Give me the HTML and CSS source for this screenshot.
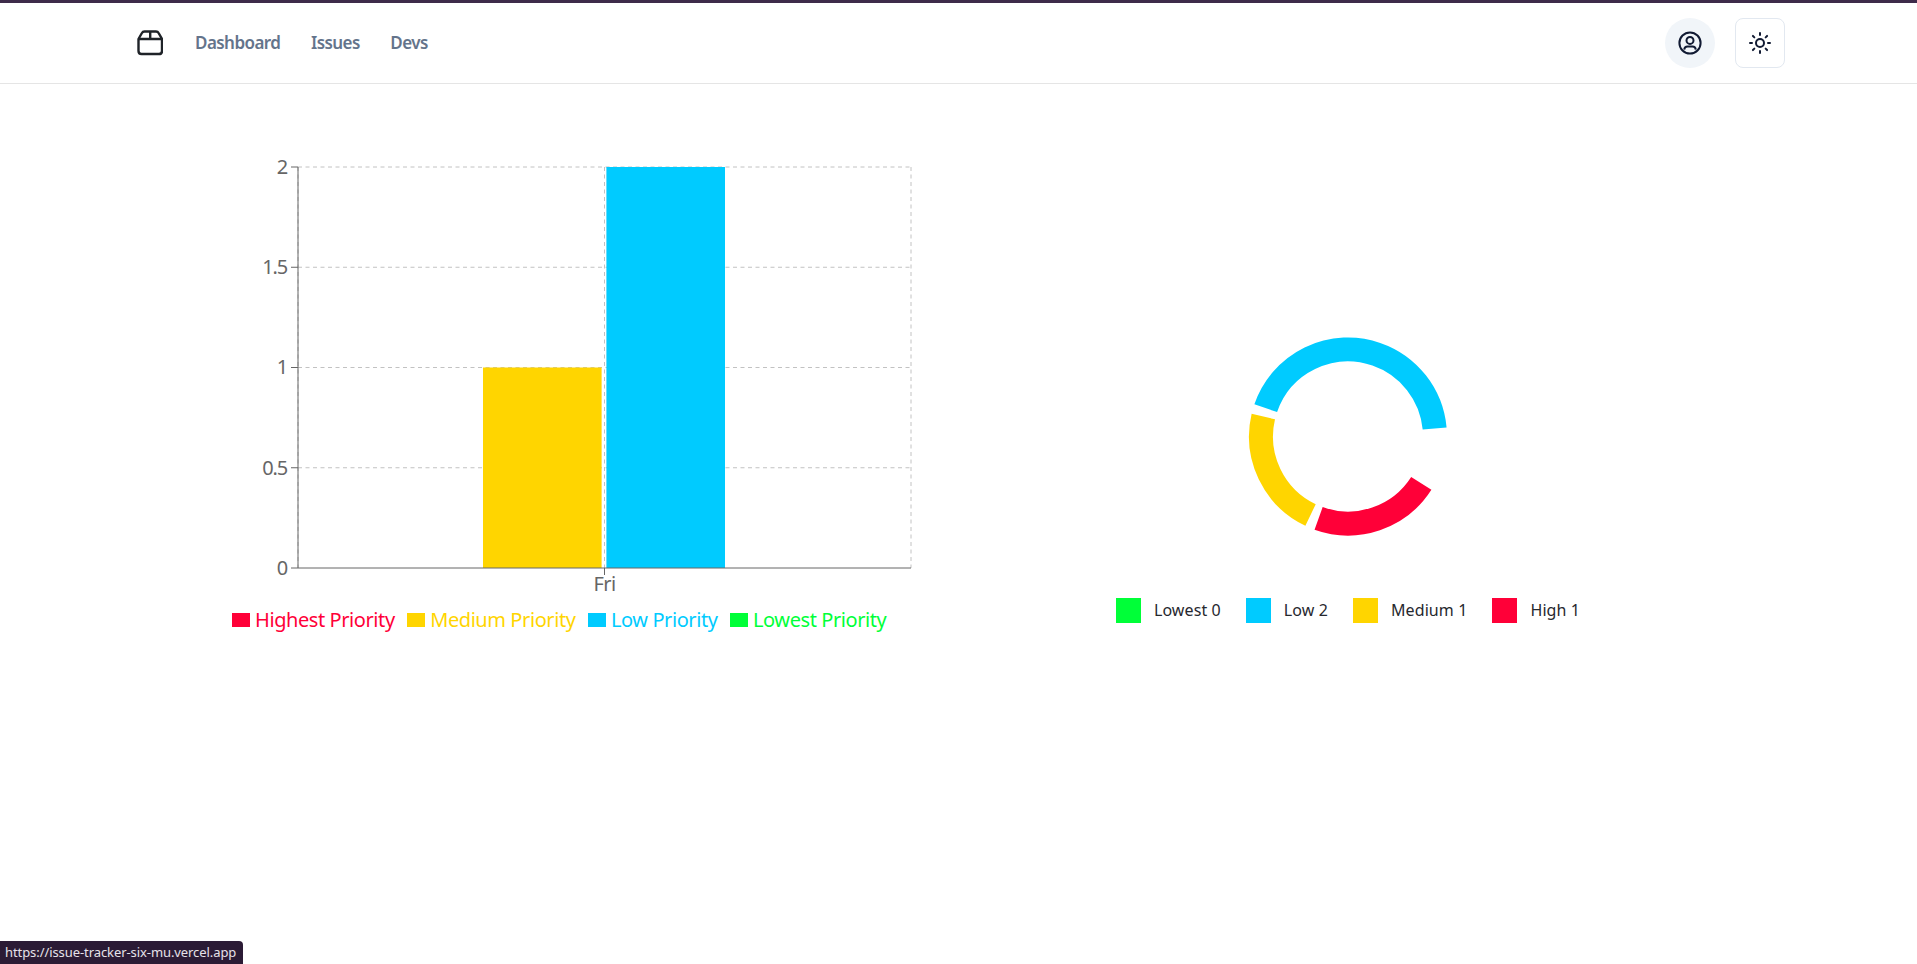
FILE: index.html
```html
<!DOCTYPE html>
<html lang="en">
<head>
    <meta charset="UTF-8">
    <meta name="viewport" content="width=device-width, initial-scale=1.0">
    <title>Issue Tracker</title>
    <link rel="stylesheet" href="styles.css">
</head>
<body>
    <header class="navbar">
        <div class="nav-left">
            <svg class="logo" width="26" height="26" viewBox="0 0 26 26" fill="none" stroke="#1f2328" stroke-width="2.4" stroke-linejoin="round">
                <path d="M1.5 9V21Q1.5 24 4.5 24H22Q25 24 25 21V9L21.6 3Q20.8 1.5 19 1.5H7.5Q5.7 1.5 4.9 3Z"/>
                <path d="M1.5 9H25M13.2 1.5V9"/>
            </svg>
            <nav class="nav-links">
                <a href="#">Dashboard</a>
                <a href="#">Issues</a>
                <a href="#">Devs</a>
            </nav>
        </div>
        <div class="nav-right">
            <button class="avatar-btn" type="button">
                <svg width="26" height="26" viewBox="0 0 26 26" fill="none" stroke="#111a33" stroke-width="2">
                    <circle cx="13" cy="13" r="10.6"/>
                    <circle cx="13" cy="10.4" r="3.5"/>
                    <path d="M7.2 19.6Q7.6 16.4 10.5 16.4H15.5Q18.4 16.4 18.8 19.6"/>
                </svg>
            </button>
            <button class="theme-btn" type="button">
                <svg width="24" height="24" viewBox="0 0 24 24" fill="none" stroke="#111a33" stroke-width="2" stroke-linecap="round">
                    <circle cx="12" cy="12" r="4"/>
                    <path d="M12 2v2M12 20v2M4.93 4.93l1.41 1.41M17.66 17.66l1.41 1.41M2 12h2M20 12h2M6.34 17.66l-1.41 1.41M19.07 4.93l-1.41 1.41"/>
                </svg>
            </button>
        </div>
    </header>

    <main class="charts">
        <section class="bar-chart">
            <svg width="700" height="450" viewBox="0 0 700 450">
                <!-- grid -->
                <g class="grid">
                    <line x1="58" y1="17" x2="671" y2="17"/>
                    <line x1="58" y1="117.25" x2="671" y2="117.25"/>
                    <line x1="58" y1="217.5" x2="671" y2="217.5"/>
                    <line x1="58" y1="317.75" x2="671" y2="317.75"/>
                    <line x1="58" y1="17" x2="58" y2="418"/>
                    <line x1="364.5" y1="17" x2="364.5" y2="418"/>
                    <line x1="671" y1="17" x2="671" y2="418"/>
                </g>
                <!-- bars -->
                <rect x="243" y="217.5" width="118.6" height="200.5" fill="#ffd500"/>
                <rect x="366.4" y="17" width="118.6" height="401" fill="#00cbff"/>
                <!-- axes -->
                <g class="axis">
                    <line x1="58" y1="17" x2="58" y2="418"/>
                    <line x1="58" y1="418" x2="671" y2="418"/>
                    <line x1="51" y1="17" x2="58" y2="17"/>
                    <line x1="51" y1="117.25" x2="58" y2="117.25"/>
                    <line x1="51" y1="217.5" x2="58" y2="217.5"/>
                    <line x1="51" y1="317.75" x2="58" y2="317.75"/>
                    <line x1="51" y1="418" x2="58" y2="418"/>
                    <line x1="364.5" y1="418" x2="364.5" y2="425"/>
                </g>
                <g class="ticks">
                    <text x="47" y="24">2</text>
                    <text x="47" y="124">1.5</text>
                    <text x="47" y="224">1</text>
                    <text x="47" y="325">0.5</text>
                    <text x="47" y="425">0</text>
                    <text class="tick-x" x="364.5" y="441">Fri</text>
                </g>
            </svg>
            <ul class="bar-legend">
                <li class="red"><span class="key"></span>Highest Priority</li>
                <li class="yellow"><span class="key"></span>Medium Priority</li>
                <li class="blue"><span class="key"></span>Low Priority</li>
                <li class="green"><span class="key"></span>Lowest Priority</li>
            </ul>
        </section>

        <section class="donut-chart">
            <svg class="donut" width="240" height="240" viewBox="0 0 240 240" fill="none" stroke-width="24">
                <circle cx="120" cy="119.5" r="87" pathLength="360" stroke="#00cbff" stroke-dasharray="155.7 204.3" transform="rotate(-161 120 119.5)"/>
                <circle cx="120" cy="119.5" r="87" pathLength="360" stroke="#ffd500" stroke-dasharray="77.7 282.3" transform="rotate(-244.5 120 119.5)"/>
                <circle cx="120" cy="119.5" r="87" pathLength="360" stroke="#ff0038" stroke-dasharray="77.1 282.9" transform="rotate(-327.4 120 119.5)"/>
            </svg>
            <ul class="donut-legend">
                <li><span class="swatch green-bg"></span>Lowest 0</li>
                <li><span class="swatch blue-bg"></span>Low 2</li>
                <li><span class="swatch yellow-bg"></span>Medium 1</li>
                <li><span class="swatch red-bg"></span>High 1</li>
            </ul>
        </section>
    </main>

    <div class="status-link">https://issue-tracker-six-mu.vercel.app</div>
</body>
</html>
```

FILE: styles.css
```css
* {
    box-sizing: border-box;
}
html, body {
    height: 100%;
}
body {
    margin: 0;
    font-family: "Noto Sans", "Open Sans", sans-serif;
    background-color: #fff;
    overflow: hidden;
}
ul {
    list-style: none;
    margin: 0;
    padding: 0;
}
.navbar {
    display: flex;
    justify-content: space-between;
    align-items: center;
    height: 84px;
    padding: 0 132px 0 137px;
    border-top: 3px solid #3e2b4a;
    border-bottom: 1px solid #e5e5e5;
}
.nav-left {
    display: flex;
    align-items: center;
    gap: 32px;
}
.logo {
    display: block;
}
.nav-links {
    display: flex;
    gap: 30.5px;
    margin-top: -2px;
}
.nav-links a {
    color: #64748b;
    font-size: 17px;
    font-weight: 600;
    text-decoration: none;
    letter-spacing: -0.55px;
}
.nav-right {
    display: flex;
    align-items: center;
    gap: 20px;
}
.avatar-btn, .theme-btn {
    display: flex;
    align-items: center;
    justify-content: center;
    width: 50px;
    height: 50px;
    padding: 0;
    background: #fff;
}
.avatar-btn {
    border: 0;
    border-radius: 50%;
    background: #f1f5f9;
}
.theme-btn {
    border: 1px solid #e2e8f0;
    border-radius: 8px;
}
.charts {
    display: flex;
    gap: 58px;
    padding: 66px 0 0 240px;
}
.bar-chart {
    width: 700px;
}
.bar-chart svg {
    display: block;
}
.grid line {
    stroke: #c2c2c2;
    stroke-dasharray: 4 3.5;
}
.axis line {
    stroke: #666;
}
.ticks text {
    fill: #666;
    font-size: 20px;
    text-anchor: end;
    letter-spacing: -1.2px;
}
.ticks .tick-x {
    text-anchor: middle;
    letter-spacing: -0.6px;
}
.bar-legend {
    display: flex;
    gap: 12.5px;
    margin: 8px 0 0 -8px;
    font-size: 20px;
    letter-spacing: -0.42px;
    line-height: 24px;
}
.bar-legend li {
    display: flex;
    align-items: center;
    white-space: nowrap;
}
.key {
    width: 18px;
    height: 14px;
    margin-right: 5px;
    background-color: currentColor;
}
.red { color: #ff0038; }
.yellow { color: #ffd500; }
.blue { color: #00cbff; }
.green { color: #00ff38; }
.donut-chart {
    display: flex;
    flex-direction: column;
    align-items: center;
    width: 700px;
    padding-top: 167px;
}
.donut {
    display: block;
}
.donut-legend {
    display: flex;
    gap: 25px;
    margin-top: 41px;
    color: #26282e;
    font-size: 16px;
    letter-spacing: 0.1px;
    line-height: 25px;
}
.donut-legend li {
    display: flex;
    align-items: center;
    gap: 13px;
}
.swatch {
    width: 25px;
    height: 25px;
}
.red-bg { background-color: #ff0038; }
.yellow-bg { background-color: #ffd500; }
.blue-bg { background-color: #00cbff; }
.green-bg { background-color: #00ff38; }
.status-link {
    position: fixed;
    left: 0;
    bottom: 0;
    width: 243px;
    height: 23px;
    padding-left: 5px;
    background-color: #2b1b35;
    border-top-right-radius: 4px;
    color: #e6e2e9;
    font-size: 13px;
    line-height: 22px;
    white-space: nowrap;
    letter-spacing: -0.08px;
}
```
